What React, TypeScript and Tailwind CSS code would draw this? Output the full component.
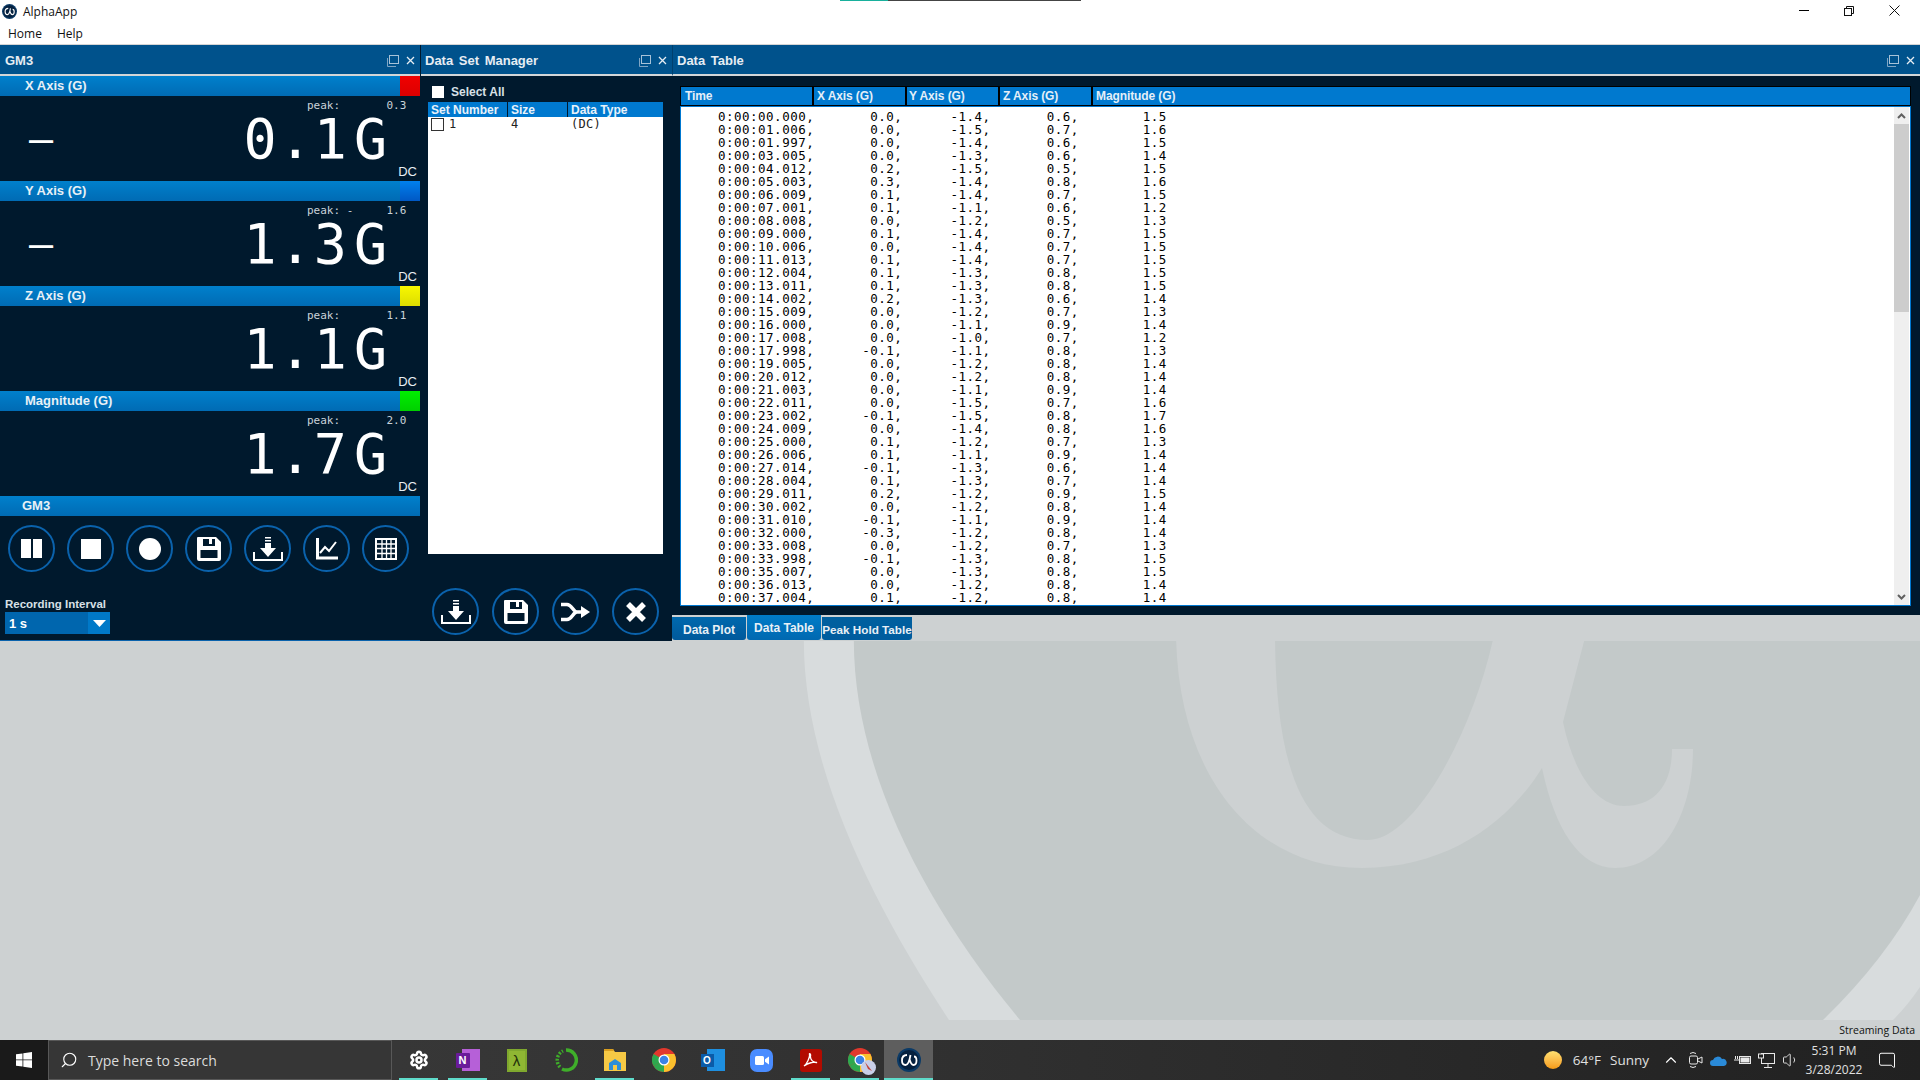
import { Settings, Search, ChevronUp, MessageSquare, Volume1 } from "lucide-react";
import type { ReactNode } from "react";

const MONO = "font-['DejaVu_Sans_Mono',monospace]";

const RAW_ROWS = `00.000 0.0 -1.4 0.6 1.5
01.006 0.0 -1.5 0.7 1.6
01.997 0.0 -1.4 0.6 1.5
03.005 0.0 -1.3 0.6 1.4
04.012 0.2 -1.5 0.5 1.5
05.003 0.3 -1.4 0.8 1.6
06.009 0.1 -1.4 0.7 1.5
07.001 0.1 -1.1 0.6 1.2
08.008 0.0 -1.2 0.5 1.3
09.000 0.1 -1.4 0.7 1.5
10.006 0.0 -1.4 0.7 1.5
11.013 0.1 -1.4 0.7 1.5
12.004 0.1 -1.3 0.8 1.5
13.011 0.1 -1.3 0.8 1.5
14.002 0.2 -1.3 0.6 1.4
15.009 0.0 -1.2 0.7 1.3
16.000 0.0 -1.1 0.9 1.4
17.008 0.0 -1.0 0.7 1.2
17.998 -0.1 -1.1 0.8 1.3
19.005 0.0 -1.2 0.8 1.4
20.012 0.0 -1.2 0.8 1.4
21.003 0.0 -1.1 0.9 1.4
22.011 0.0 -1.5 0.7 1.6
23.002 -0.1 -1.5 0.8 1.7
24.009 0.0 -1.4 0.8 1.6
25.000 0.1 -1.2 0.7 1.3
26.006 0.1 -1.1 0.9 1.4
27.014 -0.1 -1.3 0.6 1.4
28.004 0.1 -1.3 0.7 1.4
29.011 0.2 -1.2 0.9 1.5
30.002 0.0 -1.2 0.8 1.4
31.010 -0.1 -1.1 0.9 1.4
32.000 -0.3 -1.2 0.8 1.4
33.008 0.0 -1.2 0.7 1.3
33.998 -0.1 -1.3 0.8 1.5
35.007 0.0 -1.3 0.8 1.5
36.013 0.0 -1.2 0.8 1.4
37.004 0.1 -1.2 0.8 1.4`;

const ROWS = RAW_ROWS.split("\n").map((line) => {
  const [time, x, y, z, mag] = line.split(" ");
  const cols = [x, y, z].map((v) => `${v},`.padStart(11)).join("");
  return `0:00:${time},${cols}${mag.padStart(11)}`;
});

const AXES = [
  { label: "X Axis (G)", swatch: "bg-gradient-to-b from-[#f00000] to-[#dc0000]", peak: "peak:       0.3", value: "0.1", sign: true },
  { label: "Y Axis (G)", swatch: "bg-gradient-to-b from-[#0080ee] to-[#0058c4]", peak: "peak: -     1.6", value: "1.3", sign: true },
  { label: "Z Axis (G)", swatch: "bg-gradient-to-b from-[#f8f800] to-[#dcdc00]", peak: "peak:       1.1", value: "1.1", sign: false },
  { label: "Magnitude (G)", swatch: "bg-gradient-to-b from-[#00ee00] to-[#00d000]", peak: "peak:       2.0", value: "1.7", sign: false },
];

function AlphaLogo({ size }: { size: number }) {
  return (
    <svg width={size} height={size} viewBox="0 0 24 24">
      <circle cx="12" cy="12" r="12" fill="#0b3a66" />
      <circle cx="12" cy="12" r="10" fill="#05213f" />
      <path d="M10 7C6.500 7 5 9.500 5 12.500C5 15.500 6.500 17 8.500 17C11 17 12.500 13 13.500 7M12.500 11C13.500 15 14.500 17 16.500 17C18.500 17 19.500 15 19.500 12.500C19.500 10 18.500 8.500 17 8.500" fill="none" stroke="#fff" strokeWidth="1.800" />
    </svg>
  );
}

function PanelTitle({ title, divided, indent = "pl-[4px]" }: { title: string; divided?: boolean; indent?: string }) {
  return (
    <div className={`flex h-[31px] shrink-0 items-center border-b-2 border-b-[#d3d6d8] bg-[#00528c] pr-[2px] pt-[2px] text-[13px] font-bold text-[#e6edf3] ${divided ? "border-l border-l-[#00406e]" : ""}`}>
      <span className={`${indent} [word-spacing:2px]`}>{title}</span>
      <svg className="ml-auto" width="12" height="12" viewBox="0 0 12 12" fill="none">
        <rect x="2.500" y="0.500" width="9" height="8" stroke="#a7c2d8" />
        <path d="M0.500 3V11.500H9" stroke="#7fa5c4" />
      </svg>
      <svg className="ml-[7px] mr-[3px]" width="9" height="9" viewBox="0 0 9 9" stroke="#e6edf3" strokeWidth="1.300">
        <path d="M1 1L8 8M8 1L1 8" />
      </svg>
    </div>
  );
}

function Bar({ label, swatch, indent = "pl-[25px]" }: { label: string; swatch?: string; indent?: string }) {
  return (
    <div className="flex h-[20px] items-stretch bg-gradient-to-b from-[#0080cc] to-[#006bb4] text-[13px] font-bold leading-[20px] text-[#e8f0f6]">
      <span className={`flex-1 ${indent}`}>{label}</span>
      {swatch && <span className={`w-[20px] ${swatch}`} />}
    </div>
  );
}

function AxisReadout({ axis }: { axis: (typeof AXES)[number] }) {
  return (
    <section>
      <Bar label={axis.label} swatch={axis.swatch} />
      <div className="flex h-[85px] flex-col">
        <div className={`${MONO} mt-[3px] h-[13px] whitespace-pre pl-[307px] text-[11px] leading-[13px] text-[#c9d2d9]`}>{axis.peak}</div>
        <div className={`${MONO} flex h-[54px] items-center justify-between pl-[29px] pr-[33px] text-[55px] leading-[54px] text-white`}>
          <span className="text-[40px]">{axis.sign ? "–" : ""}</span>
          <span className="whitespace-pre">
            <span className="tracking-[2px]">{axis.value}</span>
            <span className="ml-[5px]">G</span>
          </span>
        </div>
        <div className="h-[15px] pr-[3px] text-right text-[13px] leading-[12px] text-[#e8eef2]">DC</div>
      </div>
    </section>
  );
}

function RoundButton({ children }: { children: ReactNode }) {
  return (
    <button className="flex h-[47px] w-[47px] shrink-0 items-center justify-center rounded-full border-[2.5px] border-[#0a62ac]">
      {children}
    </button>
  );
}

const PauseIcon = () => (
  <svg width="21" height="19" viewBox="0 0 21 19" fill="#fff"><rect x="0" width="10" height="19" /><rect x="12" width="9" height="19" /></svg>
);
const StopIcon = () => <div className="h-[20px] w-[20px] bg-white" />;
const RecordIcon = () => <div className="h-[22px] w-[22px] rounded-full bg-white" />;
const SaveIcon = () => (
  <svg width="24" height="24" viewBox="0 0 24 24">
    <path fillRule="evenodd" fill="#fff" d="M1 0H19L24 5V22A2 2 0 0 1 22 24H2A2 2 0 0 1 0 22V1A1 1 0 0 1 1 0ZM6 2V9H18V2H15V7H12V2ZM3.500 13V21H20.500V13Z" />
  </svg>
);
const DownloadIcon = () => (
  <svg width="30" height="24" viewBox="0 0 30 24" fill="#fff">
    <rect x="12" y="0" width="6" height="1.500" /><rect x="12" y="3" width="6" height="1.500" />
    <path d="M12 6H18V11H23L15 20L7 11H12Z" />
    <path d="M0 15H2V22H28V15H30V24H0Z" />
  </svg>
);
const ChartIcon = () => (
  <svg width="22" height="22" viewBox="0 0 22 22" fill="none" stroke="#fff">
    <path d="M1.500 0V20H22" strokeWidth="3" />
    <path d="M4 15L9 9L13 13L20 4" strokeWidth="2" />
  </svg>
);
const GridIcon = () => (
  <svg width="22" height="22" viewBox="0 0 22 22" fill="none" stroke="#fff">
    <rect x="1" y="1" width="20" height="20" strokeWidth="2" />
    <path d="M1 6H21M1 10.500H21M1 15.500H21M7 1V21M11.500 1V21M16 1V21" strokeWidth="1.300" />
  </svg>
);
const MergeIcon = () => (
  <svg width="30" height="20" viewBox="0 0 30 20" fill="none">
    <path d="M0 2.500H6C11 2.500 12 10 16 10H22M0 17.500H6C11 17.500 12 10 16 10" stroke="#fff" strokeWidth="3.500" />
    <path d="M20 4L29 10L20 16Z" fill="#fff" />
  </svg>
);
const CrossIcon = () => (
  <svg width="20" height="20" viewBox="0 0 20 20" stroke="#fff" strokeWidth="5.500"><path d="M2 2L18 18M18 2L2 18" /></svg>
);

function GaugePanel() {
  return (
    <div className="flex w-[420px] shrink-0 flex-col border-b border-[#0a62ac] bg-[#00192d]">
      <PanelTitle title="GM3" indent="pl-[5px]" />
      {AXES.map((axis) => (
        <AxisReadout key={axis.label} axis={axis} />
      ))}
      <Bar label="GM3" indent="pl-[22px]" />
      <div className="mt-[9px] flex gap-[12px] pl-[8px]">
        <RoundButton><PauseIcon /></RoundButton>
        <RoundButton><StopIcon /></RoundButton>
        <RoundButton><RecordIcon /></RoundButton>
        <RoundButton><SaveIcon /></RoundButton>
        <RoundButton><DownloadIcon /></RoundButton>
        <RoundButton><ChartIcon /></RoundButton>
        <RoundButton><GridIcon /></RoundButton>
      </div>
      <div className="ml-[5px] mt-[25px] text-[11.5px] font-bold leading-[15px] text-[#d8e0e6]">Recording Interval</div>
      <div className="ml-[5px] flex h-[22px] w-[105px] bg-[#0066ae] text-[13px] font-bold leading-[23px] text-white">
        <span className="flex-1 pl-[4px]">1 s</span>
        <span className="flex w-[22px] items-center justify-center bg-[#0079c8]">
          <svg width="13" height="7" viewBox="0 0 13 7" fill="#fff"><path d="M0 0H13L6.500 7Z" /></svg>
        </span>
      </div>
    </div>
  );
}

function DataSetPanel() {
  return (
    <div className="flex w-[252px] shrink-0 flex-col bg-[#00192d] pl-[1px]">
      <PanelTitle title="Data Set Manager" />
      <div className="flex h-[26px] items-center pl-[11px] pt-[5px] text-[12px] font-bold text-[#d8e0e6]">
        <span className="h-[12px] w-[12px] bg-white" />
        <span className="ml-[7px]">Select All</span>
      </div>
      <div className="ml-[7px] h-[452px] w-[235px] bg-white">
        <div className="flex h-[15px] bg-[#0079cf] text-[12px] font-bold leading-[17px] text-[#e8f2fa]">
          <span className="w-[80px] border-r border-[#00192d] pl-[3px]">Set Number</span>
          <span className="w-[60px] border-r border-[#00192d] pl-[3px]">Size</span>
          <span className="flex-1 pl-[3px]">Data Type</span>
        </div>
        <div className={`${MONO} mt-[1px] flex h-[13px] items-center text-[12px] leading-[13px] tracking-[0.3px] text-[#222]`}>
          <span className="ml-[3px] h-[13px] w-[13px] border border-[#333]" />
          <span className="ml-[5px] w-[62px]">1</span>
          <span className="w-[60px]">4</span>
          <span>(DC)</span>
        </div>
      </div>
      <div className="mt-[34px] flex gap-[13px] pl-[11px]">
        <RoundButton><DownloadIcon /></RoundButton>
        <RoundButton><SaveIcon /></RoundButton>
        <RoundButton><MergeIcon /></RoundButton>
        <RoundButton><CrossIcon /></RoundButton>
      </div>
    </div>
  );
}

function DataTablePanel() {
  return (
    <div className="flex min-w-0 flex-1 flex-col">
      <PanelTitle title="Data Table" divided />
      <div className="flex h-[539px] flex-col bg-[#00192d] pb-[9px] pl-[8px] pr-[9px] pt-[10px]">
        <div className="flex h-[20px] shrink-0 gap-[2px] border border-black bg-black text-[12px] font-bold leading-[18px] tracking-[-0.1px] text-[#e4eff8]">
          <span className="w-[131px] bg-[#0079cf] pl-[4px]">Time</span>
          <span className="w-[91px] bg-[#0079cf] pl-[3px]">X Axis (G)</span>
          <span className="w-[91px] bg-[#0079cf] pl-[2px]">Y Axis (G)</span>
          <span className="w-[91px] bg-[#0079cf] pl-[3px]">Z Axis (G)</span>
          <span className="flex-1 bg-[#0079cf] pl-[3px]">Magnitude (G)</span>
        </div>
        <div className="flex min-h-0 flex-1 overflow-hidden border border-[#0078d0] bg-white">
          <div className={`${MONO} flex-1 overflow-hidden whitespace-pre pl-[37px] pt-[3px] text-[12.5px] leading-[13px] tracking-[0.49px] text-black`}>
            {ROWS.map((row) => (
              <div key={row} className="h-[13px]">{row}</div>
            ))}
          </div>
          <div className="mr-[1px] flex w-[15px] flex-col bg-[#efefef]">
            <div className="flex h-[17px] items-center justify-center">
              <svg width="9" height="6" viewBox="0 0 9 6" fill="none" stroke="#606060" strokeWidth="2"><path d="M1 5L4.500 1.500L8 5" /></svg>
            </div>
            <div className="h-[188px] bg-[#cdcdcd]" />
            <div className="mt-auto flex h-[17px] items-center justify-center">
              <svg width="9" height="6" viewBox="0 0 9 6" fill="none" stroke="#606060" strokeWidth="2"><path d="M1 1L4.500 4.500L8 1" /></svg>
            </div>
          </div>
        </div>
      </div>
      <div className="flex h-[25px] items-end whitespace-nowrap text-[12px] font-bold text-[#e8f0f6]">
        <span className="h-[23px] w-[74px] rounded-b-[3px] bg-gradient-to-b from-[#0069ae] to-[#00599b] text-center leading-[26px]">Data Plot</span>
        <span className="ml-[1px] h-[25px] w-[74px] rounded-b-[3px] bg-gradient-to-b from-[#007cc8] to-[#0068b0] text-center leading-[26px]">Data Table</span>
        <span className="ml-[1px] h-[23px] w-[90px] rounded-b-[3px] bg-gradient-to-b from-[#00609f] to-[#005c9e] text-center text-[11.7px] leading-[26px]">Peak Hold Table</span>
      </div>
    </div>
  );
}

function Watermark() {
  return (
    <svg className="absolute inset-0 h-full w-full" viewBox="0 641 1920 379" preserveAspectRatio="none">
      <path fill="#d8dcdd" d="M804 630C800 760 870 900 949 1020H1893Q1908 1005 1920 987V630Z" />
      <path fill="#c3c9c9" d="M854 630C850 760 920 900 1020 1020H1823Q1885 960 1920 895V630Z" />
      <path
        fill="#cdd1d2"
        d="M1176 630C1176 770 1250 868 1362 868C1450 868 1510 820 1542 768C1555 830 1580 868 1615 868C1665 868 1693 810 1693 749H1672C1672 785 1655 806 1624 806C1595 806 1573 770 1563 722L1587 630H1495C1475 730 1415 840 1368 840C1300 840 1275 760 1275 630Z"
      />
    </svg>
  );
}

function TaskIcon({ active, running, children }: { active?: boolean; running?: boolean; children: ReactNode }) {
  return (
    <div className={`relative flex h-[40px] w-[49px] items-center justify-center ${active ? "bg-[#5e5e5e]" : ""}`}>
      {children}
      {running && <span className={`absolute bottom-0 h-[2px] bg-[#5fdccb] ${active ? "inset-x-0" : "inset-x-[5px]"}`} />}
    </div>
  );
}

function ChromeGlyph() {
  return (
    <svg width="24" height="24" viewBox="0 0 24 24">
      <circle cx="12" cy="12" r="12" fill="#e2382d" />
      <path d="M12 12L1.600 18A12 12 0 0 0 12 24Z" fill="#2da94f" />
      <path d="M1.600 6A12 12 0 0 0 1.600 18L7 15L12 12Z" fill="#2da94f" />
      <path d="M12 12V24A12 12 0 0 0 24 12A12 12 0 0 0 22.400 6H12Z" fill="#fbc02d" />
      <circle cx="12" cy="12" r="5.500" fill="#fff" />
      <circle cx="12" cy="12" r="4.300" fill="#3b82e6" />
    </svg>
  );
}

function Taskbar() {
  return (
    <div className="flex h-[40px] shrink-0 items-stretch bg-gradient-to-r from-[#3c3c3c] via-[#303030] to-[#212121] text-[#e0e0e0]">
      <div className="flex w-[48px] items-center justify-center bg-[#1a1a1a]">
        <svg width="16" height="16" viewBox="0 0 16 16" fill="#fff">
          <path d="M0 2.300L6.500 1.400V7.500H0ZM7.300 1.300L16 0V7.500H7.300ZM0 8.300H6.500V14.600L0 13.700ZM7.300 8.300H16V16L7.300 14.700Z" />
        </svg>
      </div>
      <div className="flex w-[344px] items-center border border-[#585858] bg-[#363636] pl-[11px] font-['Open_Sans',sans-serif] text-[14px] text-[#dcdcdc]">
        <Search size={18} strokeWidth={1.500} className="-scale-x-100 text-white" />
        <span className="ml-[10px]">Type here to search</span>
      </div>
      <div className="ml-[2px] flex">
        <TaskIcon running><Settings size={20} strokeWidth={3} className="text-white" /></TaskIcon>
        <TaskIcon running>
          <div className="relative h-[22px] w-[24px]">
            <div className="absolute right-0 h-[22px] w-[18px] bg-[#b660d8]" />
            <div className="absolute left-0 top-[4px] h-[15px] w-[14px] rounded-[1px] bg-[#6a1b9a] text-center text-[11px] font-bold leading-[15px] text-white">N</div>
          </div>
        </TaskIcon>
        <TaskIcon>
          <div className="h-[23px] w-[20px] border-2 border-[#7fa82e] bg-[#8fb733] text-center text-[15px] leading-[19px] text-[#23300a]">λ</div>
        </TaskIcon>
        <TaskIcon>
          <svg width="24" height="24" viewBox="0 0 24 24" fill="none" stroke="#3fae2a" strokeWidth="3.500">
            <path d="M12 2A10 10 0 1 1 8 21" />
            <path d="M6 19A10 10 0 0 1 9 3" strokeDasharray="2 1.500" />
          </svg>
        </TaskIcon>
        <TaskIcon running>
          <svg width="22" height="22" viewBox="0 0 22 22">
            <path d="M0 0H9L11 3H22V22H0Z" fill="#f6c945" />
            <path d="M0 0H9L10 2H0Z" fill="#d99e1f" />
            <path d="M5 21V14L11 10L17 14V21Z" fill="#2c8fd8" />
            <rect x="9" y="16" width="4" height="5" fill="#f6c945" />
          </svg>
        </TaskIcon>
        <TaskIcon><ChromeGlyph /></TaskIcon>
        <TaskIcon>
          <div className="relative h-[22px] w-[24px]">
            <div className="absolute right-0 h-[22px] w-[18px] bg-[#1e8fe0]" />
            <div className="absolute left-0 top-[5px] h-[13px] w-[13px] bg-[#0a5ba8] text-center text-[10px] font-bold leading-[13px] text-white">O</div>
          </div>
        </TaskIcon>
        <TaskIcon>
          <div className="flex h-[23px] w-[23px] items-center justify-center rounded-[7px] bg-[#4a8cff]">
            <svg width="14" height="9" viewBox="0 0 14 9" fill="#fff"><rect width="9" height="9" rx="1.500" /><path d="M10 3.200L14 0.500V8.500L10 5.800Z" /></svg>
          </div>
        </TaskIcon>
        <TaskIcon running>
          <div className="flex h-[23px] w-[22px] items-center justify-center rounded-[3px] bg-[#b30b00]">
            <svg width="15" height="15" viewBox="0 0 15 15" fill="none" stroke="#fff" strokeWidth="1.300"><path d="M1 13C4 11 7 4 6.500 1.500C6 0 8 .5 7.500 3C7 6 10 10 14 9.500C11 8.500 5 10 1 13Z" /></svg>
          </div>
        </TaskIcon>
        <TaskIcon running>
          <div className="relative">
            <ChromeGlyph />
            <div className="absolute -bottom-[3px] -right-[4px] h-[15px] w-[15px] rounded-full bg-[#c9cfe8]">
              <svg width="15" height="15" viewBox="0 0 15 15"><path d="M4 2L11 11L7 9Z" fill="#c2453d" /></svg>
            </div>
          </div>
        </TaskIcon>
        <TaskIcon active running><AlphaLogo size={24} /></TaskIcon>
      </div>
      <div className="ml-auto flex items-center font-['Open_Sans',sans-serif] text-[13.5px]">
        <span className="h-[18px] w-[18px] rounded-full bg-gradient-to-b from-[#ffe070] to-[#f59a10]" />
        <span className="ml-[11px]">64°F</span>
        <span className="ml-[9px]">Sunny</span>
        <ChevronUp size={18} strokeWidth={1.500} className="ml-[13px] text-white" />
        <div className="ml-[7px] flex w-[18px] justify-center">
          <svg width="16" height="18" viewBox="0 0 16 18" fill="none" stroke="#e8e8e8">
            <rect x="1.500" y="5" width="8" height="8" rx="1.500" /><path d="M10 8L14 6V12L10 10M2 2.500Q5 .5 8 2.500M2 15.500Q5 17.500 8 15.500" />
          </svg>
        </div>
        <div className="ml-[5px]">
          <svg width="17" height="11" viewBox="0 0 17 11" fill="#2a8ad8"><path d="M3 11A3 3 0 0 1 3 5A5 5 0 0 1 12 4A3.500 3.500 0 0 1 14 11Z" /></svg>
        </div>
        <div className="ml-[7px]">
          <svg width="18" height="12" viewBox="0 0 18 12" fill="none" stroke="#e8e8e8">
            <rect x="5.500" y="2.500" width="11" height="7" /><rect x="7" y="4" width="8" height="4" fill="#e8e8e8" /><path d="M0 6H5M1.500 2V5M3.500 2V5" />
          </svg>
        </div>
        <div className="ml-[6px]">
          <svg width="17" height="15" viewBox="0 0 17 15" fill="none" stroke="#e8e8e8">
            <rect x="3.500" y=".5" width="13" height="10" /><path d="M10 11V14M6 14.500H14" /><rect x=".5" y="1" width="5" height="4" fill="#222" />
          </svg>
        </div>
        <Volume1 size={18} strokeWidth={1.300} className="ml-[7px] text-[#e0e0e0]" />
        <div className="ml-[4px] w-[60px] text-center text-[12px] leading-[19px]">
          <div>5:31 PM</div>
          <div>3/28/2022</div>
        </div>
        <MessageSquare size={18} strokeWidth={1.300} className="ml-[14px] mr-[24px] -scale-x-100 text-white" />
      </div>
    </div>
  );
}

export default function App() {
  return (
    <div className="relative flex h-[1080px] w-[1920px] flex-col overflow-hidden bg-[#cdd1d2] font-['Liberation_Sans',Arial,sans-serif]">
      <div className="flex h-[23px] shrink-0 items-center bg-white pl-[2px] font-['Open_Sans',sans-serif] text-[12px] text-[#111]">
        <AlphaLogo size={15} />
        <span className="ml-[6px]">AlphaApp</span>
        <div className="ml-auto flex items-center pb-[2px]">
          <span className="h-[1px] w-[10px] bg-black" />
          <svg className="ml-[35px]" width="10" height="10" viewBox="0 0 10 10" fill="none" stroke="#111"><rect x=".5" y="2.500" width="7" height="7" /><path d="M2.500 2.500V.5H9.500V7.500H7.500" /></svg>
          <svg className="ml-[35px] mr-[20px]" width="11" height="11" viewBox="0 0 11 11" stroke="#111"><path d="M.5 .5L10.500 10.500M10.500 .5L.5 10.500" /></svg>
        </div>
      </div>
      <div className="absolute left-[840px] top-0 flex h-[1px] w-[241px]">
        <span className="w-[48px] bg-[#18b09c]" />
        <span className="flex-1 bg-[#444]" />
      </div>
      <div className="flex h-[22px] shrink-0 items-start gap-[15px] border-b border-[#d5d5d5] bg-white pl-[8px] font-['Open_Sans',sans-serif] text-[12px] leading-[21px] text-[#111]">
        <span>Home</span>
        <span>Help</span>
      </div>
      <div className="flex h-[596px] shrink-0">
        <GaugePanel />
        <DataSetPanel />
        <DataTablePanel />
      </div>
      <div className="relative flex min-h-0 flex-1 flex-col">
        <div className="relative min-h-0 flex-1 overflow-hidden">
          <Watermark />
        </div>
        <div className="h-[20px] shrink-0 pr-[5px] text-right font-['Open_Sans',sans-serif] text-[10.5px] leading-[20px] text-[#111]">Streaming Data</div>
      </div>
      <Taskbar />
    </div>
  );
}
